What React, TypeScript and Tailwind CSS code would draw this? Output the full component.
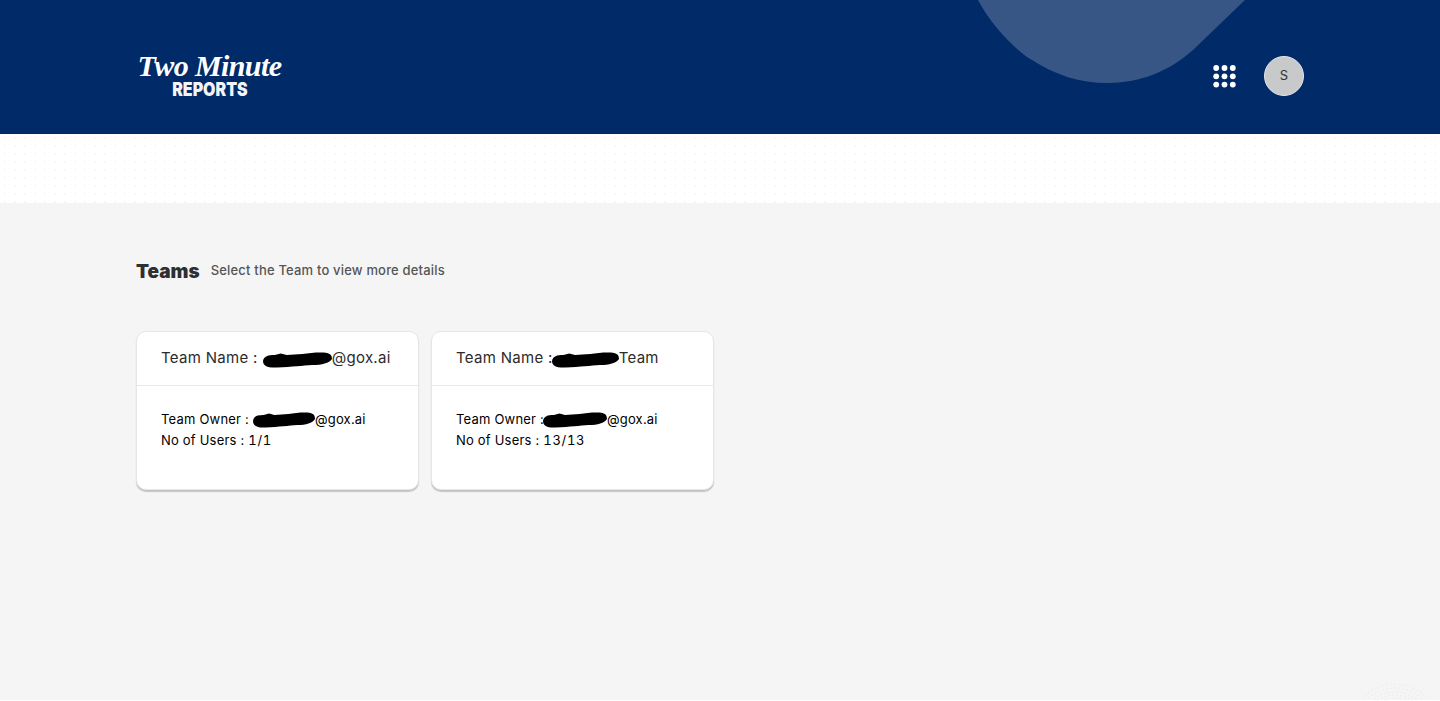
const dots = [0, 1, 2];

// faint dotted half circle in the bottom right corner
const rings = [44, 40, 36, 33, 30, 27, 24].flatMap((r) => {
  const count = Math.round((Math.PI * r) / 4);
  return Array.from({ length: count }, (_, i) => {
    const a = (Math.PI * (i + 0.5)) / count;
    return { x: 45 + r * Math.cos(a), y: 44 - r * Math.sin(a) };
  });
});

function Logo() {
  return (
    <div className="mt-[16px] flex w-[145px] flex-col items-center">
      <span className="whitespace-nowrap font-['Liberation_Serif',serif] text-[30px] italic leading-[29px] font-bold tracking-[-0.6px] text-white">
        Two Minute
      </span>
      <span className="mt-[1px] origin-center scale-x-[0.84] font-['Inter',sans-serif] text-[19px] leading-[18px] font-black text-[#f2f4f8]">
        REPORTS
      </span>
    </div>
  );
}

function AppGrid() {
  return (
    <svg width="23" height="23" viewBox="0 0 23 23" className="mt-[1px] shrink-0">
      {dots.map((row) =>
        dots.map((col) => <circle key={`${row}-${col}`} cx={3.2 + col * 8.3} cy={3 + row * 8.3} r="2.9" fill="#fff" />),
      )}
    </svg>
  );
}

function Scribble(props: { width: number; className?: string }) {
  return (
    <svg width={props.width} height="16" viewBox="0 0 70 16" preserveAspectRatio="none" className={props.className}>
      <path
        d="M0 9C1 4 5 3 12 3L18 1.5L24 3L40 2C48 1 58 0 65 1C69 2 70 4 70 7C67 11 60 13 50 13C40 13.5 30 15 14 15.5C5 16 0 14 0 9Z"
        fill="#000"
      />
    </svg>
  );
}

type TTeam = {
  after: string;
  nameScribble: number;
  nameGap: string;
  ownerScribble: number;
  ownerGap: string;
  users: string;
};

const teams: TTeam[] = [
  { after: "@gox.ai", nameScribble: 69, nameGap: "ml-[5px]", ownerScribble: 62, ownerGap: "ml-[4px]", users: "1/1" },
  { after: "Team", nameScribble: 67, nameGap: "ml-[-1px]", ownerScribble: 64, ownerGap: "ml-[-1px]", users: "13/13" },
];

function TeamCard({ team }: { team: TTeam }) {
  return (
    <div className="h-[159px] w-[283px] rounded-[10px] border border-[#e6e6e6] bg-white shadow-[0_2px_1px_rgba(0,0,0,0.2)]">
      <div className="flex h-[54px] items-center border-b border-[#e8e8e8] pb-[1px] pl-[24px] text-[15px] tracking-[0.3px] text-[#2b2b2b]">
        <span className="whitespace-nowrap">Team Name :</span>
        <Scribble width={team.nameScribble} className={`${team.nameGap} mt-[3px] shrink-0`} />
        <span>{team.after}</span>
      </div>
      <div className="pt-[23px] pl-[24px] text-[13px] leading-[21px] tracking-[0.2px] text-black">
        <div className="flex items-center">
          <span className="whitespace-nowrap">Team Owner :</span>
          <Scribble width={team.ownerScribble} className={`${team.ownerGap} shrink-0`} />
          <span>@gox.ai</span>
        </div>
        <div>
          No of Users : <span className="tracking-[0.7px] tabular-nums">{team.users}</span>
        </div>
      </div>
    </div>
  );
}

export default function App() {
  return (
    <div className="flex h-[701px] flex-col overflow-hidden bg-white font-['Inter',sans-serif]">
      <header className="relative flex h-[134px] shrink-0 items-center justify-between bg-[#002a68] pr-[136px] pl-[137px]">
        <svg width="300" height="90" viewBox="0 0 300 90" className="absolute top-0 left-[960px]">
          <path d="M18 0C32 27 58 52 72 60C95 75 120 83 147 83C180 83 208 72 233 50L285 0Z" fill="#375585" />
        </svg>
        <Logo />
        <div className="relative mt-[17px] flex items-center gap-[28px]">
          <AppGrid />
          <div className="flex h-[40px] w-[40px] items-center justify-center rounded-full border border-[#e4e5e7] bg-[#c8c9cb] text-[13px] text-[#333]">
            S
          </div>
        </div>
      </header>
      <div className="h-[69px] shrink-0 bg-white bg-[radial-gradient(circle,#f8f8f8_0.7px,transparent_1px)] bg-[length:10px_8px]" />
      <main className="relative h-[497px] shrink-0 overflow-hidden bg-[#f5f5f5] px-[136px] pt-[55px]">
        <div className="flex h-[26px] items-center">
          <h1 className="mt-[2px] text-[19px] font-black text-[#2f2f2f]">Teams</h1>
          <p className="ml-[11px] text-[13px] font-medium tracking-[0.18px] text-[#555]">
            Select the Team to view more details
          </p>
        </div>
        <div className="mt-[47px] flex gap-[12px]">
          {teams.map((t) => (
            <TeamCard key={t.users} team={t} />
          ))}
        </div>
        <svg width="90" height="16" viewBox="0 0 90 16" className="absolute right-[0px] bottom-[0px]">
          {rings.map((d, i) => (
            <circle key={i} cx={d.x} cy={d.y} r="0.8" fill="#ebebeb" />
          ))}
        </svg>
      </main>
    </div>
  );
}
